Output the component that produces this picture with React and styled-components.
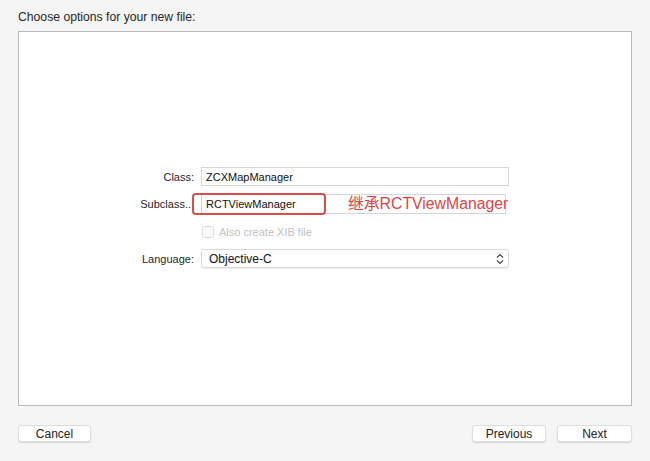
import styled, { createGlobalStyle } from "styled-components";

const Global = createGlobalStyle`
  html, body {
    margin: 0;
    padding: 0;
    background: #f5f5f5;
  }
  body {
    font-family: "Liberation Sans", "Noto Sans CJK SC", sans-serif;
    color: #222;
  }
`;

function Chevrons()
{
  return(
    <svg width="8" height="12" viewBox="0 0 8 12">
      <path d="M1 4.5 L4 1.5 L7 4.5" fill="none" stroke="#444" strokeWidth="1.2" />
      <path d="M1 7.5 L4 10.5 L7 7.5" fill="none" stroke="#444" strokeWidth="1.2" />
    </svg>
  );
}

function App()
{
  return(
    <Window>
      <Global />
      <Title>Choose options for your new file:</Title>
      <Panel>
        <Form>
          <Label>Class:</Label>
          <Field>ZCXMapManager</Field>

          <Label $pad="3px">Subclass..</Label>
          <Annotated>
            <Field $width="305px">RCTViewManager</Field>
            <RedBox />
            <RedNote>继承RCTViewManager</RedNote>
          </Annotated>

          <span />
          <CheckRow>
            <Check />
            <span>Also create XIB file</span>
          </CheckRow>

          <Label>Language:</Label>
          <Popup>
            <span>Objective-C</span>
            <Chevrons />
          </Popup>
        </Form>
      </Panel>
      <Footer>
        <Button $width="73px">Cancel</Button>
        <Right>
          <Button $width="74px">Previous</Button>
          <Button $width="75px">Next</Button>
        </Right>
      </Footer>
    </Window>
  );
}

const Window = styled.div`
  width: 650px;
  height: 461px;
  box-sizing: border-box;
  padding: 0 18px;
  display: flex;
  flex-direction: column;
`;

const Title = styled.div`
  height: 31px;
  line-height: 35px;
  font-size: 12.2px;
  color: #262626;
`;

const Panel = styled.div`
  height: 375px;
  box-sizing: border-box;
  background: #fff;
  border: 1px solid #b9b9b9;
  display: flex;
  align-items: center;
`;

const Form = styled.div`
  display: grid;
  grid-template-columns: 175px 308px;
  grid-template-rows: 19px 20px 19px 19px;
  column-gap: 7px;
  row-gap: 8px;
  margin-top: -2px;
  font-size: 11px;
`;

const Label = styled.div`
  text-align: right;
  align-self: center;
  padding-right: ${p => p.$pad || "0"};
  color: #262626;
`;

const Field = styled.div`
  width: ${p => p.$width || "100%"};
  height: 100%;
  box-sizing: border-box;
  border: 1px solid #d6d6d6;
  background: #fff;
  padding-left: 4px;
  display: flex;
  align-items: center;
  color: #111;
`;

const Annotated = styled.div`
  position: relative;
  display: flex;
`;

const RedBox = styled.div`
  position: absolute;
  left: -9px;
  top: -1px;
  width: 134px;
  height: 22px;
  box-sizing: border-box;
  border: 2px solid #dd4b4b;
  border-radius: 4px;
`;

const RedNote = styled.div`
  position: absolute;
  left: 147px;
  top: 0;
  height: 20px;
  line-height: 19px;
  font-size: 15.8px;
  color: #e04444;
  white-space: nowrap;
`;

const CheckRow = styled.div`
  display: flex;
  align-items: center;
  gap: 5px;
  padding-left: 1px;
  color: #c2c2c2;
`;

const Check = styled.span`
  width: 10px;
  height: 10px;
  border: 1px solid #dcdcdc;
  border-radius: 2px;
  background: #fbfbfb;
`;

const Popup = styled.div`
  height: 100%;
  box-sizing: border-box;
  border: 1px solid #dadada;
  border-radius: 3px;
  box-shadow: 0 1px 1px rgba(0, 0, 0, 0.08);
  background: #fff;
  padding: 0 4px 0 7px;
  display: flex;
  align-items: center;
  justify-content: space-between;
  font-size: 12px;
  color: #111;
`;

const Footer = styled.div`
  display: flex;
  justify-content: space-between;
  margin-top: 19px;
`;

const Right = styled.div`
  display: flex;
  gap: 11px;
`;

const Button = styled.button`
  width: ${p => p.$width};
  height: 17px;
  padding: 0;
  border: 1px solid #dedede;
  border-radius: 3px;
  background: #fff;
  box-shadow: 0 1px 1px rgba(0, 0, 0, 0.12);
  font-family: "Liberation Sans", sans-serif;
  font-size: 12px;
  color: #222;
`;

export default App;
